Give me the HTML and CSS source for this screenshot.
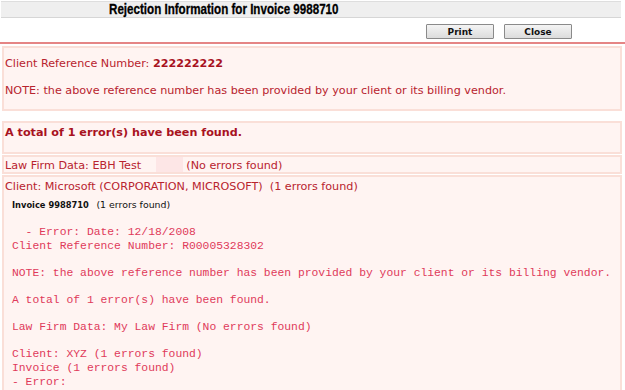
FILE: index.html
```
<!DOCTYPE html>
<html lang="en">
<head>
    <meta charset="UTF-8">
    <title>Rejection Information for Invoice 9988710</title>
    <link rel="stylesheet" href="styles.css">
</head>
<body>
    <div class="title-bar">
        <h1 class="title">Rejection Information for Invoice 9988710</h1>
    </div>
    <div class="actions">
        <button class="btn">Print</button>
        <button class="btn">Close</button>
    </div>
    <div class="rule"></div>

    <div class="box ref-box">
        <p>Client Reference Number: <b class="num">222222222</b></p>
        <p class="note">NOTE: the above reference number has been provided by your client or its billing vendor.</p>
    </div>

    <div class="box total-box">
        <p class="total">A total of 1 error(s) have been found.</p>
    </div>

    <div class="box row-box">
        <p>Law Firm Data: EBH Test <span class="blank"></span> (No errors found)</p>
    </div>

    <div class="box client-box">
        <p>Client: Microsoft (CORPORATION, MICROSOFT) &nbsp;(1 errors found)</p>
        <p class="invoice"><b>Invoice 9988710</b> <span class="count">(1 errors found)</span></p>
<pre class="raw">
  - Error: Date: 12/18/2008
Client Reference Number: R00005328302

NOTE: the above reference number has been provided by your client or its billing vendor.

A total of 1 error(s) have been found.

Law Firm Data: My Law Firm (No errors found)

Client: XYZ (1 errors found)
Invoice (1 errors found)
- Error:
</pre>
    </div>
</body>
</html>
```

FILE: styles.css
```
html, body {
    margin: 0;
    background: #fff;
    overflow: hidden;
}

body {
    font-family: "DejaVu Sans", Tahoma, sans-serif;
    font-size: 11.2px;
    line-height: 13px;
    color: #b8232e;
}

p {
    margin: 0;
}

.title-bar {
    margin: 1px 4px 0 1px;
    height: 15px;
    background: #efefef;
    border-top: 1px solid #dedede;
    border-bottom: 1px solid #d6d6d6;
}

.title {
    display: inline-block;
    margin: 0 0 0 108px;
    font-family: "Liberation Sans", Arial, sans-serif;
    font-size: 14.5px;
    line-height: 15px;
    color: #000;
    transform: scaleX(0.8);
    transform-origin: left center;
    white-space: nowrap;
    -webkit-text-stroke: 0.3px #000;
}

.actions {
    display: flex;
    justify-content: flex-end;
    gap: 10px;
    padding: 6px 53px 0 0;
    height: 14px;
}

.btn {
    width: 68px;
    height: 15px;
    padding: 0;
    font-family: "DejaVu Sans", Tahoma, sans-serif;
    font-size: 9px;
    font-weight: bold;
    color: #111;
    background: linear-gradient(#f4f4f4, #dcdcdc);
    border: 1px solid #8a8a8a;
    border-radius: 1px;
}

.rule {
    margin-top: 4px;
    height: 2px;
    background: #e58585;
}

.box {
    box-sizing: border-box;
    margin: 1px 3px 0 2px;
    padding-left: 1px;
    background: #fff4f2;
    border: 2px solid #fadfd8;
}

.ref-box {
    margin-top: 2px;
    height: 65px;
    padding-top: 9px;
}

.ref-box .num {
    color: #a8121e;
}

.ref-box .note {
    margin-top: 14px;
}

.total-box {
    margin-top: 10px;
    height: 33px;
    padding-top: 2px;
}

.total {
    font-weight: bold;
    line-height: 15px;
    color: #a8121e;
}

.row-box {
    height: 19px;
    padding-top: 1px;
    line-height: 15px;
}

.blank {
    display: inline-block;
    width: 27px;
    height: 15px;
    margin: -1px 0 0 11px;
    vertical-align: top;
    background: #fde6e6;
}

.client-box {
    height: 230px;
    padding-top: 2px;
    border-bottom: none;
    line-height: 15px;
}

.invoice {
    padding-left: 7px;
    font-size: 8.3px;
    line-height: 21px;
    color: #111;
}

.invoice .count {
    margin-left: 5px;
    font-size: 9.4px;
}

.raw {
    margin: 10px 0 0 7px;
    font-family: "Liberation Mono", "Courier New", monospace;
    font-size: 11.35px;
    line-height: 13.6px;
    color: #e03a5a;
}
```
